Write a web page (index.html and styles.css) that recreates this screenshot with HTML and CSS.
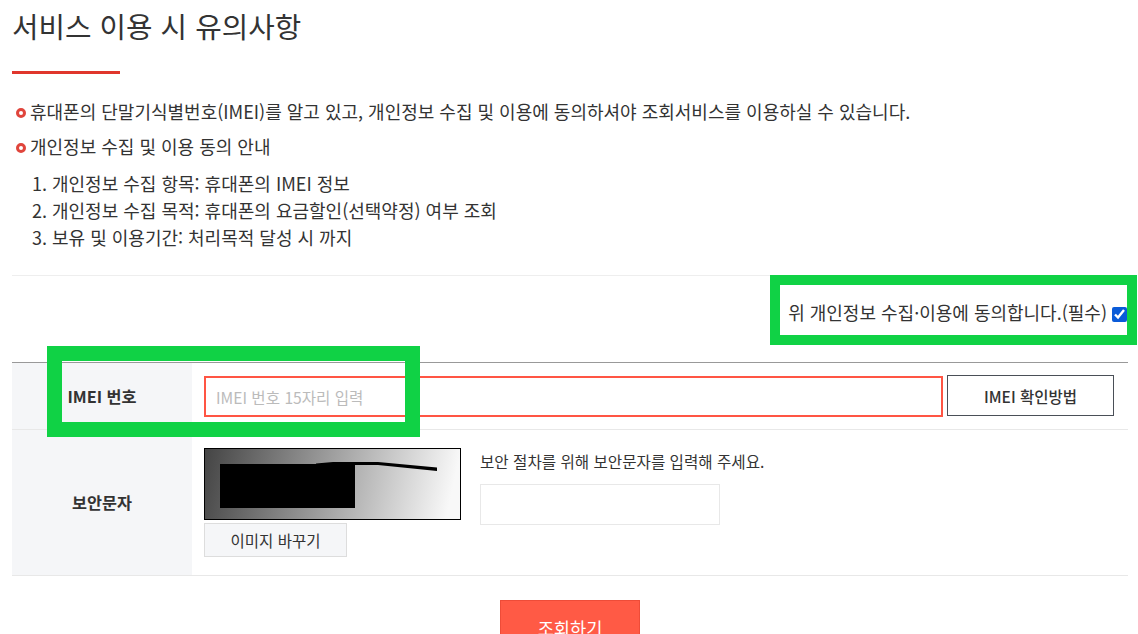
FILE: index.html

```html
<!DOCTYPE html>
<html lang="ko">
<head>
  <meta charset="UTF-8" />
  <meta name="viewport" content="width=device-width, initial-scale=1.0"/>
  <title>서비스 이용 시 유의사항</title>
  <link rel="stylesheet" href="styles.css">
</head>
<body>
<div class="page">
  <h2 class="title">서비스 이용 시 유의사항</h2>
  <div class="title-bar"></div>

  <p class="notice">휴대폰의 단말기식별번호(IMEI)를 알고 있고, 개인정보 수집 및 이용에 동의하셔야 조회서비스를 이용하실 수 있습니다.</p>
  <p class="notice second">개인정보 수집 및 이용 동의 안내</p>
  <ol class="terms">
    <li>개인정보 수집 항목: 휴대폰의 IMEI 정보</li>
    <li>개인정보 수집 목적: 휴대폰의 요금할인(선택약정) 여부 조회</li>
    <li>보유 및 이용기간: 처리목적 달성 시 까지</li>
  </ol>

  <div class="agree">
    <label for="agree">위 개인정보 수집·이용에 동의합니다.(필수)</label>
    <input type="checkbox" id="agree" checked>
  </div>

  <div class="form">
    <div class="row row-imei">
      <div class="head">IMEI 번호</div>
      <div class="cell cell-imei">
        <input class="imei-input" type="text" placeholder="IMEI 번호 15자리 입력">
        <button class="btn-outline" type="button">IMEI 확인방법</button>
      </div>
    </div>
    <div class="row row-captcha">
      <div class="head head-captcha">보안문자</div>
      <div class="cell cell-captcha">
        <div class="captcha-left">
          <svg class="captcha" width="257" height="72" viewBox="0 0 257 72">
            <defs>
              <linearGradient id="cap" x1="0" y1="0" x2="1" y2="0.06">
                <stop offset="0" stop-color="#444"/>
                <stop offset="1" stop-color="#f8f8f8"/>
              </linearGradient>
            </defs>
            <rect x="0.5" y="0.5" width="256" height="71" fill="url(#cap)" stroke="#000"/>
            <path d="M112 15.5 L129 14 L174 14 L233 19.5 L233 23 L174 17 L112 17 Z" fill="#000"/>
            <rect x="16" y="16" width="135" height="44" fill="#000"/>
          </svg>
          <button class="btn-gray" type="button">이미지 바꾸기</button>
        </div>
        <div class="captcha-right">
          <p class="captcha-text">보안 절차를 위해 보안문자를 입력해 주세요.</p>
          <input class="captcha-input" type="text">
        </div>
      </div>
    </div>
  </div>

  <div class="actions">
    <button class="btn-submit" type="button">조회하기</button>
  </div>
</div>

<div class="mark mark-agree"></div>
<div class="mark mark-imei"></div>
</body>
</html>
```

FILE: styles.css

```css
html, body {
  margin: 0;
  height: 634px;
  overflow: hidden;
  background: #fff;
}
body {
  font-family: "Noto Sans CJK KR", "Noto Sans", sans-serif;
  color: #333;
  position: relative;
}
button, input {
  font-family: inherit;
  box-sizing: border-box;
}
.page {
  width: 1116px;
  padding-left: 12px;
}
.title {
  margin: 0;
  height: 71px;
  font-size: 28.8px;
  font-weight: 400;
  line-height: 52px;
}
.title-bar {
  width: 108px;
  height: 3px;
  background: #e0362c;
  margin-bottom: 24px;
}
.notice {
  margin: 0;
  height: 35px;
  line-height: 26px;
  font-size: 18px;
  padding-left: 18px;
  position: relative;
}
.notice.second {
  height: 37px;
}
.notice::before {
  content: "";
  position: absolute;
  left: 4px;
  top: 10px;
  width: 4px;
  height: 4px;
  border: 3px solid #e0453c;
  border-radius: 50%;
}
.terms {
  margin: 0;
  padding: 0 0 0 40px;
  font-size: 18px;
  line-height: 27px;
  height: 105px;
  border-bottom: 1px solid #eee;
}
.agree {
  height: 87px;
  display: flex;
  justify-content: flex-end;
  align-items: flex-start;
  padding-top: 23px;
  box-sizing: border-box;
  font-size: 18px;
  line-height: 26px;
  gap: 5px;
  border-bottom: 1px solid #999;
}
.agree input {
  margin: 8px 1px 0 0;
  width: 15px;
  height: 15px;
  accent-color: #0a5bd8;
}
.row {
  display: flex;
  border-bottom: 1px solid #e8e8e8;
}
.row-imei { height: 66px; }
.row-captcha { height: 145px; }
.head {
  width: 180px;
  background: #f5f6f8;
  display: flex;
  align-items: center;
  justify-content: center;
  font-size: 16.3px;
  font-weight: 700;
}
.head-captcha {
  padding-bottom: 2px;
  box-sizing: border-box;
}
.cell {
  flex: 1;
  padding-left: 12px;
  display: flex;
}
.cell-imei {
  gap: 4px;
  padding-top: 12px;
}
.imei-input {
  width: 739px;
  height: 41px;
  margin-top: 1px;
  border: 2px solid #ff5544;
  padding: 0 10px;
  font-size: 15.6px;
  outline: none;
}
.imei-input::placeholder {
  color: #bbb;
}
.btn-outline {
  width: 167px;
  height: 41px;
  background: #fff;
  border: 1px solid #4a4f57;
  color: #333;
  font-size: 15.5px;
  font-weight: 500;
}
.cell-captcha {
  padding-top: 18px;
  gap: 19px;
}
.captcha {
  display: block;
  margin-bottom: 3px;
}
.btn-gray {
  width: 143px;
  height: 34px;
  background: #f5f6f8;
  border: 1px solid #ddd;
  color: #333;
  font-size: 15.5px;
}
.captcha-text {
  margin: 0 0 11px;
  font-size: 15.6px;
  line-height: 24px;
  padding-top: 1px;
}
.captcha-input {
  display: block;
  width: 240px;
  height: 41px;
  border: 1px solid #e8e8e8;
}
.actions {
  display: flex;
  justify-content: center;
  padding-top: 24px;
}
.btn-submit {
  width: 140px;
  height: 54px;
  background: #ff5a45;
  border: 1px solid #ee4c38;
  color: #fff;
  font-size: 17.6px;
}
.mark {
  position: absolute;
  border-style: solid;
  border-color: #10d245;
  box-sizing: border-box;
}
.mark-agree {
  left: 770px;
  top: 275px;
  width: 367px;
  height: 70px;
  border-width: 10px;
}
.mark-imei {
  left: 47px;
  top: 346px;
  width: 373px;
  height: 91px;
  border-width: 15px;
}
```
